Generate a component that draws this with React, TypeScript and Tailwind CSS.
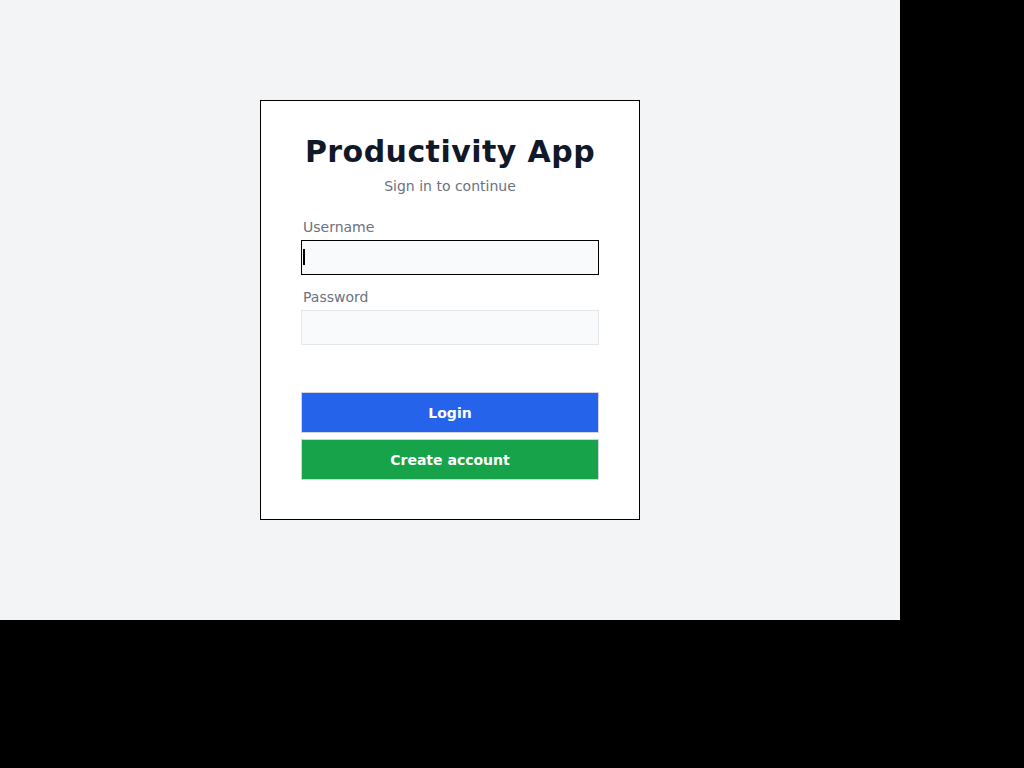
import { useState } from 'react';

export default function App() {
    const [username, setUsername] = useState('');
    const [password, setPassword] = useState('');

    return (
        <div className="min-h-screen w-full bg-black" style={{ fontFamily: '"DejaVu Sans", sans-serif' }}>
            <div className="w-[900px] h-[620px] bg-[#f3f4f6] flex items-center justify-center">
                <div className="w-[380px] bg-white border border-black px-10 pt-[33px] pb-[39px] flex flex-col">
                    <h1 className="text-[30px] leading-9 font-bold tracking-[0.45px] text-[#111827] text-center">Productivity App</h1>
                    <p className="mt-[6px] text-sm leading-5 text-[#6b7280] text-center">Sign in to continue</p>

                    <label className="mt-[21px] mb-[3px] pl-0.5 text-sm leading-5 text-[#6b7280]">Username</label>
                    <div className="relative flex">
                        <input
                            autoFocus
                            value={username}
                            onChange={(e) => setUsername(e.target.value)}
                            className="w-full h-[35px] px-0.5 border border-black bg-[#f9fafb] text-sm outline-none caret-transparent"
                        />
                        {/* caret */}
                        {username === '' && (
                            <span className="absolute left-[2px] top-[9px] w-[2px] h-4 bg-black pointer-events-none" />
                        )}
                    </div>

                    <label className="mt-3 mb-[3px] pl-0.5 text-sm leading-5 text-[#6b7280]">Password</label>
                    <input
                        type="password"
                        value={password}
                        onChange={(e) => setPassword(e.target.value)}
                        className="h-[35px] px-0.5 border border-[#e5e7eb] bg-[#f9fafb] text-sm outline-none"
                    />

                    <button className="mt-[47px] h-[41px] border border-[#d1d5db] bg-[#2563eb] text-white text-sm font-bold">
                        Login
                    </button>
                    <button className="mt-[6px] h-[41px] border border-[#d1d5db] bg-[#16a34a] text-white text-sm font-bold">
                        Create account
                    </button>
                </div>
            </div>
        </div>
    );
}
